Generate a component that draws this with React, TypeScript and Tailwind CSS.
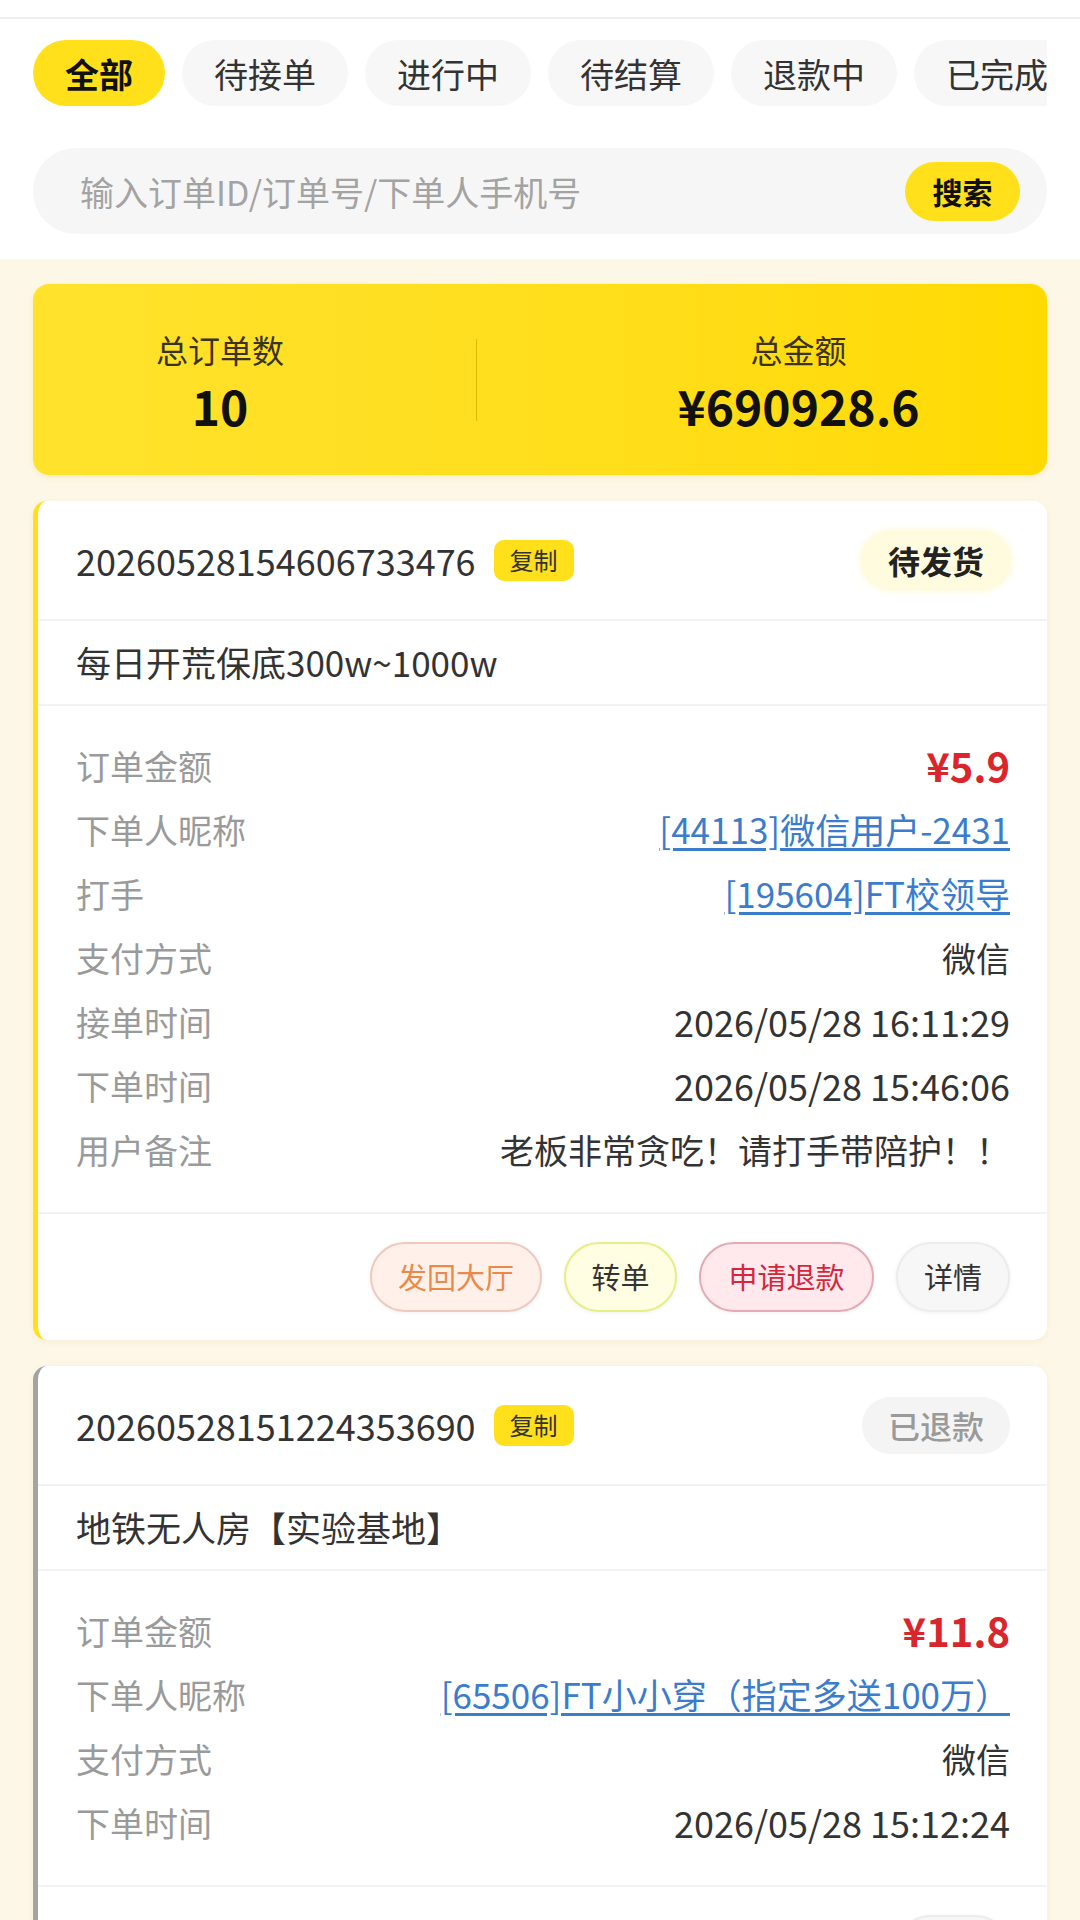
const tabs = ["全部", "待接单", "进行中", "待结算", "退款中", "已完成"];

type Row = { label: string; value: string; kind?: "price" | "link" | "time" };

const orders: {
  id: string;
  status: string;
  done: boolean;
  title: string;
  rows: Row[];
  actions: string[];
}[] = [
  {
    id: "20260528154606733476",
    status: "待发货",
    done: false,
    title: "每日开荒保底300w~1000w",
    rows: [
      { label: "订单金额", value: "¥5.9", kind: "price" },
      { label: "下单人昵称", value: "[44113]微信用户-2431", kind: "link" },
      { label: "打手", value: "[195604]FT校领导", kind: "link" },
      { label: "支付方式", value: "微信" },
      { label: "接单时间", value: "2026/05/28 16:11:29", kind: "time" },
      { label: "下单时间", value: "2026/05/28 15:46:06", kind: "time" },
      { label: "用户备注", value: "老板非常贪吃！请打手带陪护！！" },
    ],
    actions: ["发回大厅", "转单", "申请退款", "详情"],
  },
  {
    id: "20260528151224353690",
    status: "已退款",
    done: true,
    title: "地铁无人房【实验基地】",
    rows: [
      { label: "订单金额", value: "¥11.8", kind: "price" },
      { label: "下单人昵称", value: "[65506]FT小小穿（指定多送100万）", kind: "link" },
      { label: "支付方式", value: "微信" },
      { label: "下单时间", value: "2026/05/28 15:12:24", kind: "time" },
    ],
    actions: ["详情"],
  },
];

const actionStyle: Record<string, string> = {
  发回大厅: "w-[172px] bg-[#fff1ea] border-[#efc9bc] text-[#e98a4a]",
  转单: "w-[113px] bg-[#fffde2] border-[#e6ef86] text-[#333]",
  申请退款: "w-[175px] bg-[#ffe9ec] border-[#e5aab3] text-[#d3283c]",
  详情: "w-[114px] bg-[#f7f7f7] border-[#ececec] text-[#333]",
};

function OrderCard({ order }: { order: (typeof orders)[number] }) {
  return (
    <div
      className={`bg-white rounded-[14px] border-l-[5px] shadow-[0_2px_6px_rgba(200,170,90,0.12)] ${
        order.done ? "border-[#a3a3a3]" : "border-[#ffe01a]"
      }`}
    >
      <div className="h-[120px] flex items-center pl-[38px] pr-[37px] border-b-2 border-[#f2f2f2]">
        <span className="text-[36px] text-[#333]">{order.id}</span>
        <span className="ml-[18px] w-[80px] h-[41px] flex items-center justify-center rounded-[10px] bg-[#ffe01a] text-[24px] text-[#333]">
          复制
        </span>
        <span
          className={`ml-auto h-[57px] px-[26px] flex items-center rounded-full text-[32px] ${
            order.done
              ? "bg-[#f4f4f4] text-[#9a9a9a] font-medium"
              : "bg-[#fffbdf] text-[#222] font-bold shadow-[0_0_8px_#fff4b8]"
          }`}
        >
          {order.status}
        </span>
      </div>
      <div className="h-[85px] flex items-center pl-[38px] border-b-2 border-[#f2f2f2] text-[35px] text-[#333]">
        {order.title}
      </div>
      <div className="pl-[38px] pr-[37px] pt-[27px] pb-[31px] border-b-2 border-[#f2f2f2]">
        {order.rows.map((r) => (
          <div key={r.label} className="h-[64px] flex items-center justify-between">
            <span className="text-[34px] text-[#9a9a9a]">{r.label}</span>
            {r.kind === "price" ? (
              <span className="text-[40px] font-bold text-[#d9262c]">{r.value}</span>
            ) : r.kind === "link" ? (
              <span className="text-[35px] text-[#3b7ccc] underline underline-offset-4">
                {r.value}
              </span>
            ) : r.kind === "time" ? (
              <span className="text-[36px] text-[#333]">{r.value}</span>
            ) : (
              <span className="text-[34px] text-[#333]">{r.value}</span>
            )}
          </div>
        ))}
      </div>
      <div className="h-[126px] flex items-center justify-end gap-[22px] pr-[37px]">
        {order.actions.map((a) => (
          <span
            key={a}
            className={`h-[70px] flex items-center justify-center rounded-full border-2 text-[29px] shadow-[0_1px_4px_rgba(0,0,0,0.06)] ${actionStyle[a]}`}
          >
            {a}
          </span>
        ))}
      </div>
    </div>
  );
}

export default function App() {
  return (
    <div className="w-[1080px] h-[1920px] overflow-hidden bg-[#fdf7e7] font-['Noto_Sans_CJK_SC','Noto_Sans',sans-serif]">
      <div className="bg-white pb-[25px]">
        <div className="h-[17px] border-b-2 border-[#eeeeee] box-content" />
        <div className="mx-[33px] mt-[21px] flex gap-[17px] overflow-hidden">
          {tabs.map((t, i) => (
            <span
              key={t}
              className={`shrink-0 h-[66px] px-[32px] flex items-center rounded-full text-[34px] ${
                i === 0 ? "bg-[#ffe01a] text-[#111] font-bold" : "bg-[#f7f7f7] text-[#333]"
              }`}
            >
              {t}
            </span>
          ))}
        </div>
        <div className="mx-[33px] mt-[42px] h-[86px] rounded-full bg-[#f6f6f6] flex items-center pl-[47px] pr-[27px]">
          <span className="text-[34px] text-[#a3a3a3]">输入订单ID/订单号/下单人手机号</span>
          <span className="ml-auto w-[115px] h-[59px] rounded-full bg-[#ffe01a] flex items-center justify-center text-[30px] font-bold text-[#111]">
            搜索
          </span>
        </div>
      </div>

      <div className="px-[33px] pt-[25px] flex flex-col gap-[26px]">
        <div className="h-[191px] rounded-[16px] bg-gradient-to-r from-[#ffe22c] to-[#ffda00] flex items-center shadow-[0_2px_6px_rgba(220,180,0,0.15)]">
          <div className="w-[374px] flex flex-col items-center">
            <span className="text-[32px] text-[#3a3320]">总订单数</span>
            <span className="text-[48px] font-bold text-[#111] leading-tight mt-[2px]">10</span>
          </div>
          <div className="ml-[69px] w-px h-[82px] bg-[#d8bd00]" />
          <div className="ml-[73px] flex-1 flex flex-col items-center">
            <span className="text-[32px] text-[#3a3320]">总金额</span>
            <span className="text-[48px] font-bold text-[#111] leading-tight mt-[2px]">¥690928.6</span>
          </div>
        </div>
        {orders.map((o) => (
          <OrderCard key={o.id} order={o} />
        ))}
      </div>
    </div>
  );
}
